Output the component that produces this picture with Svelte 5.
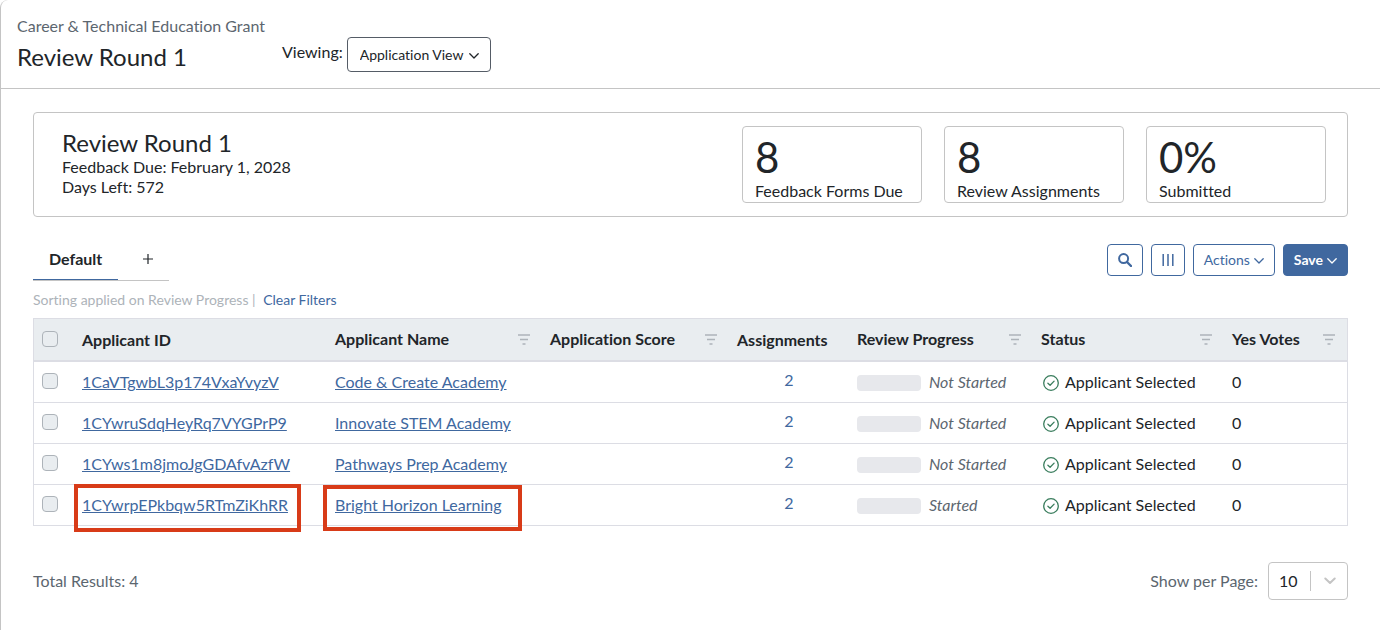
<script>
  let vista = "Application View";
  let porPagina = 10;
  let seleccionados = [];

  const columnas = [
    { nombre: "Applicant ID", ancho: 253 },
    { nombre: "Applicant Name", ancho: 215, filtro: true },
    { nombre: "Application Score", ancho: 187, filtro: true },
    { nombre: "Assignments", ancho: 120, centrada: true },
    { nombre: "Review Progress", ancho: 184, filtro: true },
    { nombre: "Status", ancho: 191, filtro: true },
    { nombre: "Yes Votes", ancho: 131, filtro: true },
  ];

  const totales = [
    { valor: "8", texto: "Feedback Forms Due" },
    { valor: "8", texto: "Review Assignments" },
    { valor: "0%", texto: "Submitted" },
  ];

  const filas = [
    { id: "1CaVTgwbL3p174VxaYvyzV", nombre: "Code & Create Academy", progreso: "Not Started" },
    { id: "1CYwruSdqHeyRq7VYGPrP9", nombre: "Innovate STEM Academy", progreso: "Not Started" },
    { id: "1CYws1m8jmoJgGDAfvAzfW", nombre: "Pathways Prep Academy", progreso: "Not Started" },
    { id: "1CYwrpEPkbqw5RTmZiKhRR", nombre: "Bright Horizon Learning", progreso: "Started", marcada: true },
  ];

  function seleccionarTodos(e) {
    seleccionados = e.target.checked ? filas.map((f) => f.id) : [];
  }
</script>

{#snippet flecha()}
  <svg class="flecha" width="10" height="6" viewBox="0 0 10 6" aria-hidden="true">
    <path d="M.8.8 5 5 9.2.8" fill="none" stroke="currentColor" stroke-width="1.3" stroke-linecap="round" stroke-linejoin="round" />
  </svg>
{/snippet}

<div class="pagina">
  <header>
    <div class="titulo">
      <p>Career &amp; Technical Education Grant</p>
      <h1>Review Round 1</h1>
    </div>
    <div class="vista">
      <label for="vista">Viewing:</label>
      <div class="lista">
        <select id="vista" bind:value={vista}>
          <option>Application View</option>
        </select>
        {@render flecha()}
      </div>
    </div>
  </header>

  <main>
    <section class="resumen">
      <div class="ronda">
        <h2>Review Round 1</h2>
        <p>Feedback Due: February 1, 2028</p>
        <p>Days Left: 572</p>
      </div>
      <div class="totales">
        {#each totales as t}
          <div class="total">
            <strong>{t.valor}</strong>
            <span>{t.texto}</span>
          </div>
        {/each}
      </div>
    </section>

    <div class="barra">
      <div class="tabs">
        <button class="tab activa">Default</button>
        <button class="tab mas" aria-label="Add view">
          <svg width="10" height="10" viewBox="0 0 10 10">
            <path d="M5 0v10M0 5h10" stroke="currentColor" stroke-width="1.2" />
          </svg>
        </button>
      </div>
      <div class="acciones">
        <button class="boton icono" aria-label="Search">
          <svg width="14" height="14" viewBox="0 0 14 14">
            <circle cx="5.6" cy="5.6" r="4.5" fill="none" stroke="currentColor" stroke-width="2" />
            <path d="m9 9 4 4" stroke="currentColor" stroke-width="2.4" stroke-linecap="round" />
          </svg>
        </button>
        <button class="boton icono" aria-label="Columns">
          <svg width="12" height="12" viewBox="0 0 12 12">
            <path d="M1.2 0v12M6 0v12M10.8 0v12" stroke="currentColor" stroke-width="1.5" />
          </svg>
        </button>
        <button class="boton">Actions {@render flecha()}</button>
        <button class="boton guardar">Save {@render flecha()}</button>
      </div>
    </div>

    <p class="orden">
      Sorting applied on Review Progress | <a href="#limpiar">Clear Filters</a>
    </p>

    <table>
      <colgroup>
        <col style="width: 32px" />
        {#each columnas as c}
          <col style="width: {c.ancho}px" />
        {/each}
      </colgroup>
      <thead>
        <tr>
          <th class="check">
            <input
              type="checkbox"
              aria-label="Select all"
              checked={seleccionados.length === filas.length}
              on:change={seleccionarTodos}
            />
          </th>
          {#each columnas as c}
            <th class:centrada={c.centrada} class:filtrable={c.filtro}>
              <div class="cabecera">
                <span>{c.nombre}</span>
                {#if c.filtro}
                  <button class="filtro" aria-label="Filter {c.nombre}">
                    <svg width="12" height="11" viewBox="0 0 12 11">
                      <path d="M0 1h12M2 5.5h8M4.5 10h3" stroke="currentColor" stroke-width="1.4" />
                    </svg>
                  </button>
                {/if}
              </div>
            </th>
          {/each}
        </tr>
      </thead>
      <tbody>
        {#each filas as f (f.id)}
          <tr>
            <td class="check">
              <input type="checkbox" value={f.id} aria-label="Select {f.nombre}" bind:group={seleccionados} />
            </td>
            <td><span class:marca={f.marcada}><a href="#{f.id}">{f.id}</a></span></td>
            <td><span class="nombre" class:marca={f.marcada}><a href="#{f.id}">{f.nombre}</a></span></td>
            <td></td>
            <td class="centrada"><a class="numero" href="#asignaciones">2</a></td>
            <td>
              <div class="progreso">
                <div class="pista"></div>
                <em>{f.progreso}</em>
              </div>
            </td>
            <td>
              <div class="estado">
                <svg width="16" height="16" viewBox="0 0 16 16" aria-hidden="true">
                  <circle cx="8" cy="8" r="7.3" />
                  <path d="m4.9 8.2 2.2 2.1 4-4.2" />
                </svg>
                <span>Applicant Selected</span>
              </div>
            </td>
            <td>0</td>
          </tr>
        {/each}
      </tbody>
    </table>

    <footer>
      <span>Total Results: {filas.length}</span>
      <div class="paginas">
        <label for="porPagina">Show per Page:</label>
        <div class="lista">
          <select id="porPagina" bind:value={porPagina}>
            <option value={10}>10</option>
            <option value={25}>25</option>
          </select>
          <svg class="flecha" width="12" height="8" viewBox="0 0 12 8" aria-hidden="true">
            <path d="M1.3 1.5 6 6l4.7-4.5" fill="none" stroke="currentColor" stroke-width="2" stroke-linecap="round" stroke-linejoin="round" />
          </svg>
        </div>
      </div>
    </footer>
  </main>
</div>

<style>
  :global(body) {
    background: #fff;
  }

  .pagina {
    min-height: 100vh;
    box-sizing: border-box;
    border-left: 1px solid #c4c4c4;
    border-top-left-radius: 8px;
    font-family: Lato, sans-serif;
    font-size: 16px;
    font-variant-ligatures: none;
    line-height: 24px;
    color: #212529;
  }

  .pagina * {
    box-sizing: border-box;
  }

  h1,
  h2,
  p {
    margin: 0;
    font-weight: 400;
  }

  h1,
  h2 {
    font-size: 24px;
    line-height: 28px;
  }

  a {
    color: #40689f;
  }

  button,
  select {
    font-family: inherit;
    font-variant-ligatures: none;
    color: inherit;
    cursor: pointer;
  }

  header {
    display: flex;
    gap: 16px;
    height: 89px;
    padding: 14px 16px;
    border-bottom: 1px solid #c4c4c4;
  }

  .titulo {
    width: 249px;
    white-space: nowrap;
  }

  .titulo p {
    color: #5c666f;
  }

  .titulo h1 {
    margin-top: 5px;
  }

  .vista {
    display: flex;
    gap: 4px;
    padding-top: 23px;
  }

  .vista label {
    line-height: 30px;
  }

  .lista {
    position: relative;
  }

  .lista select {
    appearance: none;
    background: #fff;
    border: 1px solid #c4c4c4;
    border-radius: 4px;
  }

  .lista .flecha {
    position: absolute;
    top: 50%;
    right: 12px;
    margin-top: -3px;
    pointer-events: none;
  }

  .vista select {
    width: 144px;
    height: 35px;
    padding: 0 12px;
    border-color: #555c66;
    font-size: 14px;
  }

  main {
    padding: 23px 32px;
  }

  .resumen {
    display: flex;
    justify-content: space-between;
    padding: 13px 21px 13px 28px;
    border: 1px solid #c4c4c4;
    border-radius: 4px;
  }

  .ronda {
    padding-top: 3px;
    line-height: 20px;
  }

  .totales {
    display: flex;
    gap: 22px;
  }

  .total {
    display: flex;
    flex-direction: column;
    width: 180px;
    height: 77px;
    padding: 6px 12px 0;
    border: 1px solid #c4c4c4;
    border-radius: 4px;
  }

  .total strong {
    font-size: 42px;
    line-height: 48px;
    font-weight: 400;
  }

  .total span {
    line-height: 20px;
  }

  .barra {
    display: flex;
    justify-content: space-between;
    margin-top: 24px;
  }

  .tabs {
    display: flex;
  }

  .tab {
    height: 40px;
    padding: 0 16px 4px;
    background: none;
    border: 0;
    border-bottom: 1px solid #c4c4c4;
  }

  .tab.activa {
    box-shadow: inset 0 -1px #40689f;
    font-size: 16px;
    font-weight: 700;
  }

  .tab.mas {
    width: 51px;
    padding: 0 0 4px 8px;
  }

  .acciones {
    display: flex;
    gap: 8px;
    padding-top: 3px;
  }

  .boton {
    display: flex;
    align-items: center;
    gap: 4px;
    height: 32px;
    padding: 0 10px 2px;
    background: #fff;
    border: 1px solid #40689f;
    border-radius: 4px;
    color: #40689f;
    font-size: 14px;
  }

  .boton .flecha {
    margin-top: 4px;
  }

  .boton.icono {
    padding: 0 10px;
  }

  .boton.guardar {
    background: #40689f;
    color: #fff;
    font-weight: 700;
  }

  .orden {
    margin-top: 9px;
    font-size: 14px;
    line-height: 20px;
    color: #adb3b9;
  }

  .orden a {
    margin-left: 4px;
    text-decoration: none;
  }

  table {
    width: 100%;
    margin-top: 8px;
    table-layout: fixed;
    border-spacing: 0;
    border: 1px solid #dcdde4;
  }

  th {
    height: 43px;
    padding: 0 4px 0 16px;
    background: #e9edf0;
    border-bottom: 2px solid #dcdde4;
    text-align: left;
    white-space: nowrap;
  }

  th.filtrable {
    padding-bottom: 2px;
  }

  td {
    height: 41px;
    padding: 0 0 0 16px;
    border-bottom: 1px solid #dcdde4;
    white-space: nowrap;
  }

  tr:last-child td {
    height: 40px;
    border-bottom: 0;
  }

  th:last-child {
    padding-right: 12px;
  }

  .check {
    padding: 0 8px 2px;
  }

  .check input {
    display: block;
    appearance: none;
    width: 16px;
    height: 16px;
    margin: 0;
    background: #e9edf0;
    border: 1px solid #adb3b9;
    border-radius: 4px;
  }

  .check input:checked {
    background: #40689f;
  }

  .cabecera {
    display: flex;
    align-items: center;
    justify-content: space-between;
  }

  .filtrable .filtro {
    padding-top: 2px;
  }

  td.centrada {
    padding-bottom: 4px;
    text-align: center;
  }

  .filtro {
    display: flex;
    padding: 0;
    background: none;
    border: 0;
    color: #adb3b9;
  }

  .numero {
    text-decoration: none;
  }

  .progreso {
    display: flex;
    align-items: center;
    gap: 8px;
  }

  .pista {
    width: 64px;
    height: 16px;
    margin-top: 2px;
    background: #e7e8ec;
    border-radius: 4px;
  }

  .progreso em {
    color: #5c666f;
  }

  .estado {
    display: flex;
    align-items: center;
    gap: 6px;
    padding-left: 2px;
  }

  .estado svg {
    margin-top: 2px;
    fill: none;
    stroke: #3a7d5d;
    stroke-width: 1.3;
    stroke-linecap: round;
    stroke-linejoin: round;
  }

  /* red frame laid over the row of interest */
  .marca {
    position: relative;
    display: inline-block;
  }

  .marca::after {
    content: "";
    position: absolute;
    inset: -9px -13px -15px -8px;
    border: 4px solid #d83b18;
    pointer-events: none;
  }

  .nombre.marca::after {
    inset: -8px -20px -14px -12px;
  }

  footer {
    display: flex;
    align-items: center;
    justify-content: space-between;
    margin-top: 36px;
    color: #5c666f;
  }

  .paginas {
    display: flex;
    align-items: center;
    gap: 10px;
  }

  .paginas select {
    width: 80px;
    height: 38px;
    padding: 0 10px 2px;
    font-size: 16px;
    color: #212529;
  }

  .paginas .flecha {
    margin-top: -4px;
    color: #c4c4c4;
  }

  .paginas .lista::after {
    content: "";
    position: absolute;
    top: 9px;
    bottom: 9px;
    right: 37px;
    width: 1px;
    background: #c4c4c4;
  }
</style>
